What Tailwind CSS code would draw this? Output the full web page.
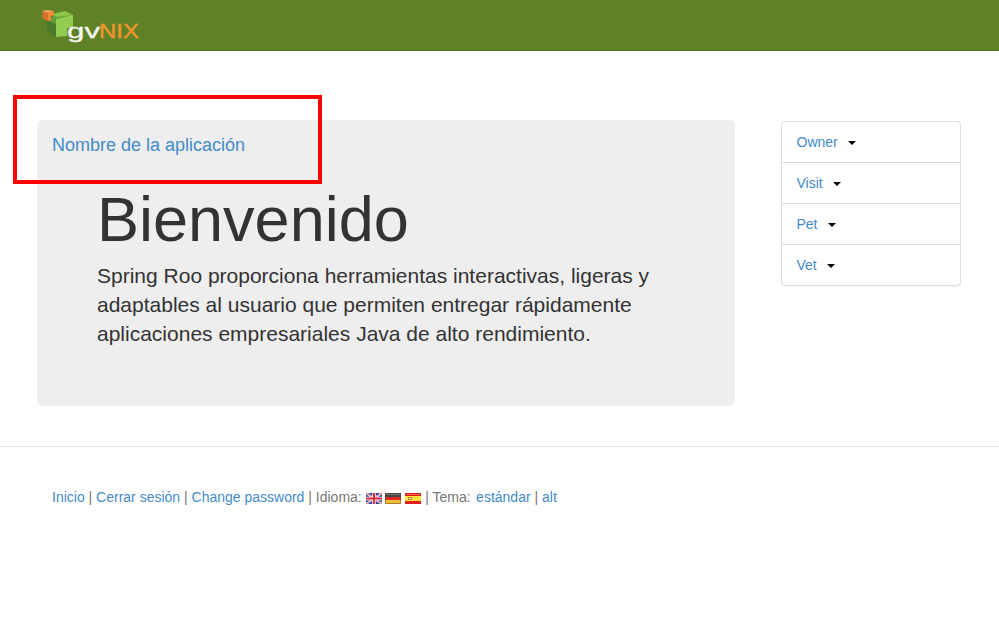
<!DOCTYPE html>
<html lang="es">
<head>
<meta charset="utf-8">
<title>gvNIX</title>
<script src="https://cdn.jsdelivr.net/npm/@tailwindcss/browser@4"></script>
</head>
<body class="relative h-[621px] overflow-hidden bg-white font-['Liberation_Sans',Arial,sans-serif] text-sm text-[#333]">
<header class="h-[51px] border-b border-[#4f6e1d] bg-[#608226] pl-[38px] pt-[5px]">
<svg width="104" height="38" viewBox="38 5 104 38" role="img">
<path d="M46.500 21L56 24V37L47 31Z" fill="#4b7a2e"/>
<path d="M53 14L65 11L73 15L72.500 18L65 18L56 20Z" fill="#8cc64a"/>
<path d="M46.500 20L52 18V15L57 17L65 16L73 15L65 19L56 24Z" fill="#669c38"/>
<path d="M56 19L73 15V28H67V36L56 37Z" fill="#92cd50"/>
<path d="M42 11L48 10L54 11L48 13Z" fill="#f8a35a"/>
<path d="M42 11L48 13V21L43 19Z" fill="#d7702b"/>
<path d="M48 13L54 11V15L51 16V20L48 21Z" fill="#f28a35"/>
<text x="67" y="37.500" textLength="33" lengthAdjust="spacingAndGlyphs" font-family="Liberation Sans, sans-serif" font-size="20" fill="#f4f7ef" stroke="#f4f7ef" stroke-width=".3">gv</text>
<text x="99" y="37.500" textLength="40" lengthAdjust="spacingAndGlyphs" font-family="Liberation Sans, sans-serif" font-size="19.500" fill="#f6952c" stroke="#f6952c" stroke-width=".3">NIX</text>
</svg>
</header>
<div class="flex items-start pl-[37px] pt-[69px]">
<main class="h-[286px] w-[698px] rounded-md bg-[#eee]">
<h3 class="pl-[15px] pt-[15px] text-[18px] leading-5"><a class="text-[#428bca]">Nombre de la aplicación</a></h3>
<section class="pl-[60px] pt-[33px]">
<h1 class="text-[63px] leading-[63px]">Bienvenido</h1>
<p class="mt-[10px] text-[21px] leading-[29px]">Spring Roo proporciona herramientas interactivas, ligeras y<br>adaptables al usuario que permiten entregar rápidamente<br>aplicaciones empresariales Java de alto rendimiento.</p>
</section>
</main>
<nav class="ml-[46px] mt-px w-[180px] divide-y divide-[#ddd] rounded border border-[#ddd] text-[#428bca] shadow-[0_1px_1px_rgba(0,0,0,0.05)]">
<a class="flex h-[41px] items-center gap-[10px] pl-[14.500px]">Owner <i class="mt-px border-x-4 border-t-4 border-x-transparent border-t-black"></i></a>
<a class="flex h-[41px] items-center gap-[10px] pl-[14.500px]">Visit <i class="mt-px border-x-4 border-t-4 border-x-transparent border-t-black"></i></a>
<a class="flex h-[41px] items-center gap-[10px] pl-[14.500px]">Pet <i class="mt-px border-x-4 border-t-4 border-x-transparent border-t-black"></i></a>
<a class="flex h-[40px] items-center gap-[10px] pl-[14.500px]">Vet <i class="mt-px border-x-4 border-t-4 border-x-transparent border-t-black"></i></a>
</nav>
</div>
<footer class="mt-[40px] border-t border-[#e5e5e5] pl-[52px] pt-[40px] leading-5 text-[#777]">
<p class="flex whitespace-pre"><a class="text-[#428bca]">Inicio</a> <span> | </span><a class="text-[#428bca]">Cerrar sesión</a><span> | </span><a class="text-[#428bca]">Change password</a><span> | Idioma: </span><svg class="mt-[6px]" width="16" height="11" viewBox="0 0 16 11"><path d="M0 0H16V11H0Z" fill="#29479b"/><path d="M0 0L16 11M16 0L0 11" stroke="#fff" stroke-width="2"/><path d="M0 0L16 11M16 0L0 11" stroke="#dc3545" stroke-width=".8"/><path d="M8 0V11M0 5.5H16" stroke="#fff" stroke-width="3.4"/><path d="M8 0V11M0 5.5H16" stroke="#d92336" stroke-width="1.8"/></svg><span class="-ml-[.5px]"> </span><svg class="mt-[6px]" width="16" height="11" viewBox="0 0 16 11"><path d="M0 0H16V4H0Z" fill="#444"/><path d="M0 4H16V7H0Z" fill="#e02b20"/><path d="M0 7H16V11H0Z" fill="#f3bd35"/><path d="M.5.5H15.5V10.5H.5Z" fill="none" stroke="#60401f" stroke-opacity=".5"/><path d="M1 1.5H15" stroke="#777"/></svg><span> </span><svg class="mt-[6px]" width="16" height="11" viewBox="0 0 16 11"><path d="M0 0H16V11H0Z" fill="#df2018"/><path d="M0 3H16V8H0Z" fill="#ffe239"/><path d="M3 4H7V7H3Z" fill="#c98335"/><path d="M4 5H6V6H4Z" fill="#eee"/><path d="M1 1.5H15" stroke="#f26055"/></svg><span class="ml-[.5px]"> | Tema: </span><a class="ml-[1.5px] text-[#428bca]">estándar</a><span> | </span><a class="text-[#428bca]">alt</a></p>
</footer>
<div class="pointer-events-none absolute left-[13px] top-[95px] h-[89px] w-[309px] border-4 border-[#f00]"></div>
</body>
</html>
